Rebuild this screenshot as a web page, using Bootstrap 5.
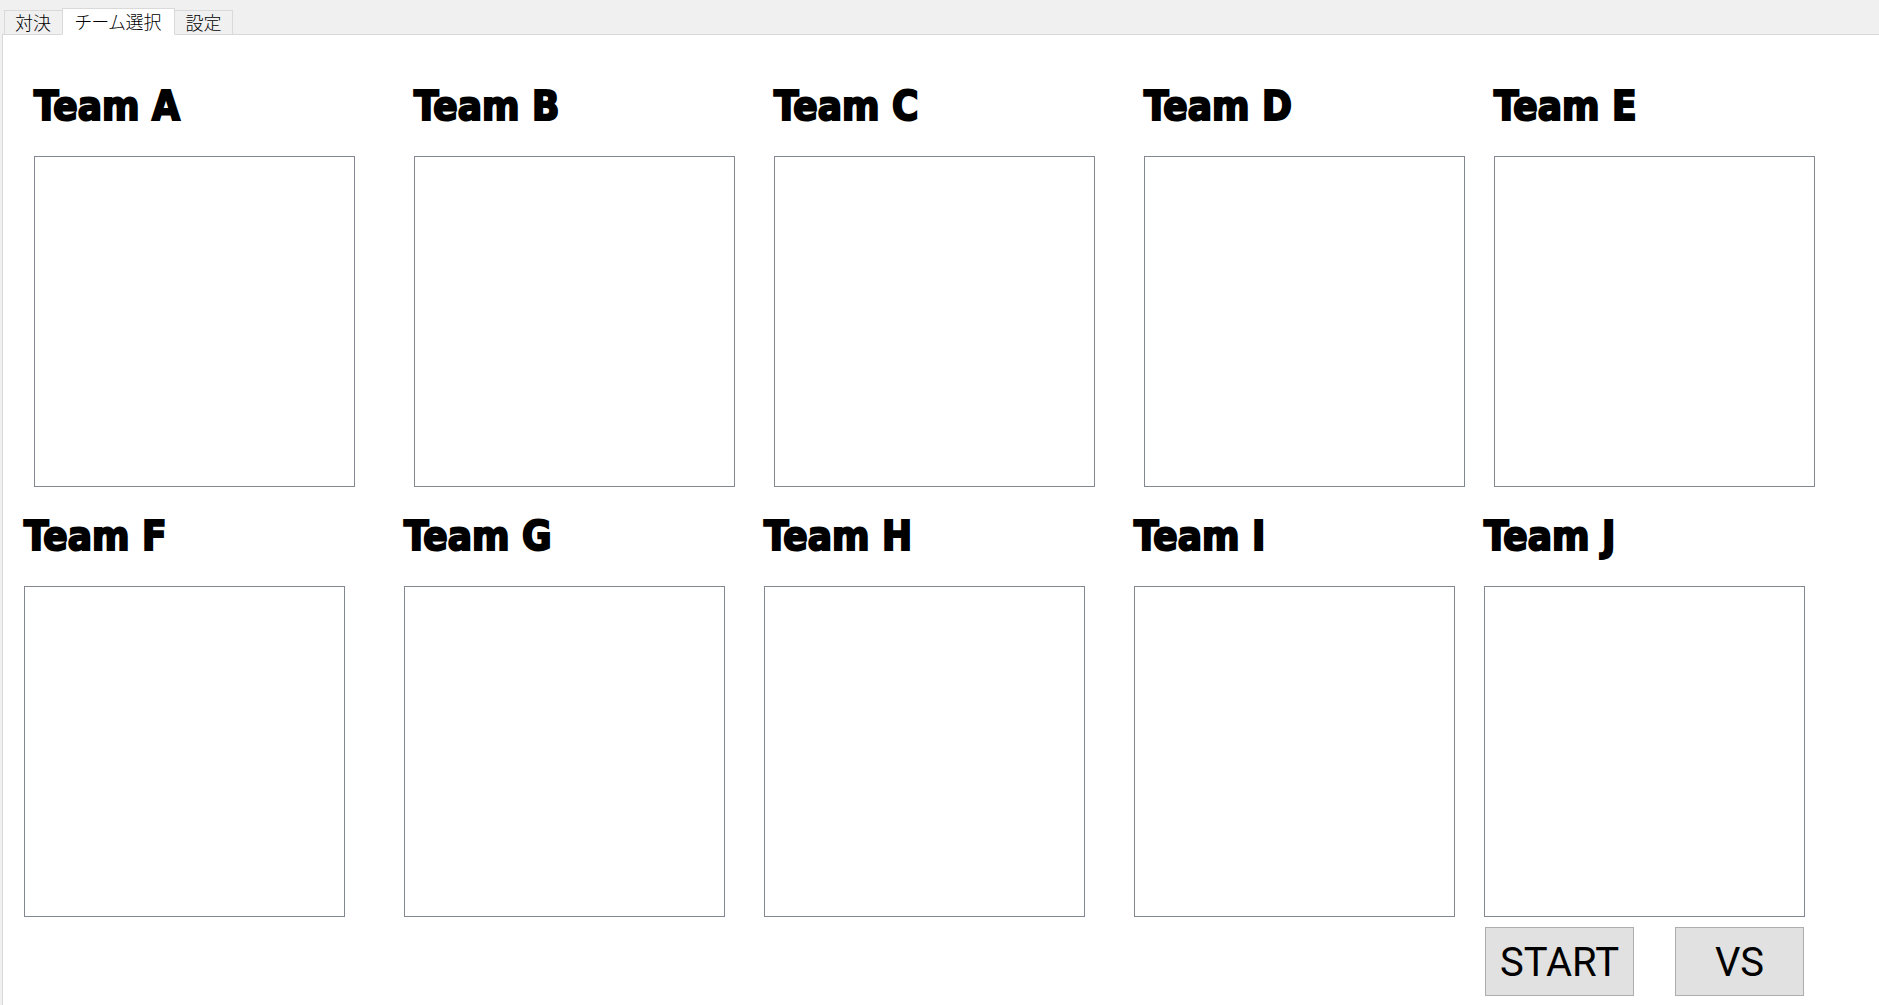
<!DOCTYPE html>
<html lang="ja">
<head>
<meta charset="utf-8">
<meta name="viewport" content="width=device-width, initial-scale=1">
<title>チーム選択</title>
<link href="https://cdn.jsdelivr.net/npm/bootstrap@5.3.0/dist/css/bootstrap.min.css" rel="stylesheet">
<style>
  body { background: #f0f0f0; color: #000; font-family: "Noto Sans CJK JP", sans-serif; }
  .tab-strip { --bs-nav-tabs-border-width: 0; padding: 8px 0 0 4px; margin-bottom: -1px; position: relative; }
  .tab-strip .nav-link {
    height: 25px; padding: 0 11px 0 10px; border: 1px solid #d9d9d9; border-right-width: 0; border-radius: 0; margin: 0;
    color: #000; background: #f0f0f0; font-size: 18px; font-weight: 300; line-height: 22px;
    font-feature-settings: "palt";
  }
  .tab-strip .nav-item:last-child .nav-link { padding: 0 10px 0 11px; border-left-width: 0; border-right-width: 1px; }
  .tab-strip .nav-link.active {
    height: 27px; padding: 0 12px; color: #000; background: #fff;
    border: 1px solid #d9d9d9; border-bottom-color: #fff; line-height: 24px;
  }
  .tab-page { margin-left: 2px; border: solid #d9d9d9; border-width: 1px 0 0 1px; background: #fff; }
  .team-row { display: grid; grid-template-columns: 380fr 360fr 370fr 350fr 385fr; }
  .row-upper { margin-left: 31px; padding-top: 41px; }
  .row-lower { margin: 0 10px 0 21px; padding-top: 19px; }
  .team-name {
    font-family: "DejaVu Sans Condensed", "DejaVu Sans", sans-serif; font-weight: 700; font-size: 40px;
    line-height: 60px; margin-bottom: 20px; -webkit-text-stroke: 2px #000;
  }
  .team-list, .team-actions { width: 321px; max-width: 100%; }
  .team-list { height: 331px; border: 1px solid #828790; border-radius: 0; background: #fff; padding: 2px; }
  .team-actions { padding: 10px 1px 0; }
  .push-btn {
    height: 69px; padding: 2px 0 0; border: 1px solid #adadad; border-radius: 0; background: #e1e1e1; color: #000;
    font-family: Roboto, sans-serif; font-size: 40px; line-height: 48px;
  }
  .btn-start { width: 149px; }
  .btn-vs { width: 129px; }
</style>
<script src="https://cdn.jsdelivr.net/npm/bootstrap@5.3.0/dist/js/bootstrap.bundle.min.js"></script>
</head>
<body class="min-vh-100 d-flex flex-column">
<ul class="nav nav-tabs tab-strip align-items-end">
  <li class="nav-item"><a class="nav-link" href="#battle">対決</a></li>
  <li class="nav-item"><a class="nav-link active" href="#teams" aria-current="page">チーム選択</a></li>
  <li class="nav-item"><a class="nav-link" href="#settings">設定</a></li>
</ul>
<main class="tab-page flex-grow-1" id="teams">
  <div class="team-row row-upper">
    <div><label class="team-name d-block" for="teamA">Team A</label><select class="team-list d-block" id="teamA" multiple></select></div>
    <div><label class="team-name d-block" for="teamB">Team B</label><select class="team-list d-block" id="teamB" multiple></select></div>
    <div><label class="team-name d-block" for="teamC">Team C</label><select class="team-list d-block" id="teamC" multiple></select></div>
    <div><label class="team-name d-block" for="teamD">Team D</label><select class="team-list d-block" id="teamD" multiple></select></div>
    <div><label class="team-name d-block" for="teamE">Team E</label><select class="team-list d-block" id="teamE" multiple></select></div>
  </div>
  <div class="team-row row-lower">
    <div><label class="team-name d-block" for="teamF">Team F</label><select class="team-list d-block" id="teamF" multiple></select></div>
    <div><label class="team-name d-block" for="teamG">Team G</label><select class="team-list d-block" id="teamG" multiple></select></div>
    <div><label class="team-name d-block" for="teamH">Team H</label><select class="team-list d-block" id="teamH" multiple></select></div>
    <div><label class="team-name d-block" for="teamI">Team I</label><select class="team-list d-block" id="teamI" multiple></select></div>
    <div>
      <label class="team-name d-block" for="teamJ">Team J</label><select class="team-list d-block" id="teamJ" multiple></select>
      <div class="team-actions d-flex justify-content-between">
        <button type="button" class="btn push-btn btn-start">START</button>
        <button type="button" class="btn push-btn btn-vs">VS</button>
      </div>
    </div>
  </div>
</main>
</body>
</html>
